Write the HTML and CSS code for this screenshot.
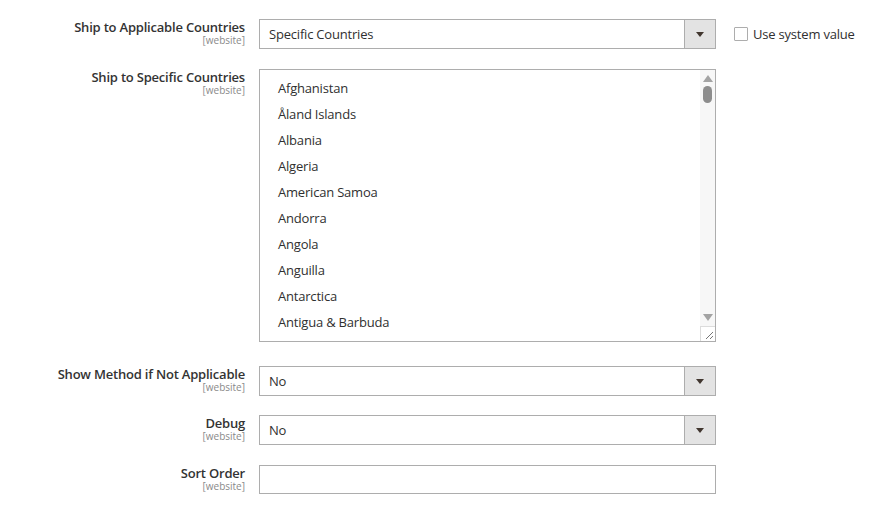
FILE: index.html
```html
<!DOCTYPE html>
<html>
<head>
<meta charset="utf-8">
<link rel="stylesheet" href="styles.css">
</head>
<body>
<div class="form">
  <div class="row r1">
    <div class="label"><span class="title">Ship to Applicable Countries</span><span class="scope">[website]</span></div>
    <div class="control">
      <div class="select"><span class="value">Specific Countries</span><span class="btn"><i class="tri"></i></span></div>
    </div>
    <label class="system"><span class="check"></span><span>Use system value</span></label>
  </div>
  <div class="row r2">
    <div class="label"><span class="title">Ship to Specific Countries</span><span class="scope">[website]</span></div>
    <div class="control">
      <div class="multi">
        <ul class="options">
          <li>Afghanistan</li>
          <li>Åland Islands</li>
          <li>Albania</li>
          <li>Algeria</li>
          <li>American Samoa</li>
          <li>Andorra</li>
          <li>Angola</li>
          <li>Anguilla</li>
          <li>Antarctica</li>
          <li>Antigua &amp; Barbuda</li>
        </ul>
        <div class="scrollbar">
          <i class="up"></i>
          <i class="thumb"></i>
          <span class="spacer"></span>
          <i class="down"></i>
          <span class="resize"><svg width="14" height="14" viewBox="0 0 14 14"><path d="M5 12 L12 5 M9 12 L12 9" stroke="#777" stroke-width="1" fill="none"/></svg></span>
        </div>
      </div>
    </div>
  </div>
  <div class="row r3">
    <div class="label"><span class="title">Show Method if Not Applicable</span><span class="scope">[website]</span></div>
    <div class="control">
      <div class="select"><span class="value">No</span><span class="btn"><i class="tri"></i></span></div>
    </div>
  </div>
  <div class="row r4">
    <div class="label"><span class="title">Debug</span><span class="scope">[website]</span></div>
    <div class="control">
      <div class="select"><span class="value">No</span><span class="btn"><i class="tri"></i></span></div>
    </div>
  </div>
  <div class="row r5">
    <div class="label"><span class="title">Sort Order</span><span class="scope">[website]</span></div>
    <div class="control">
      <div class="input"></div>
    </div>
  </div>
</div>
</body>
</html>
```

FILE: styles.css
```css
html, body {
  margin: 0;
  padding: 0;
  background: #ffffff;
}
body {
  font-family: "Open Sans", "Liberation Sans", sans-serif;
  color: #303030;
  font-size: 13px;
  letter-spacing: -0.2px;
}
.form {
  padding-top: 19px;
}
.row {
  display: grid;
  grid-template-columns: 245px 457px auto;
  column-gap: 14px;
  align-items: start;
}
.r1 { margin-bottom: 20px; }
.r2 { margin-bottom: 24px; }
.r3 { margin-bottom: 19px; }
.r4 { margin-bottom: 20px; }
.label {
  display: flex;
  flex-direction: column;
  align-items: flex-end;
  text-align: right;
}
.title {
  font-weight: 600;
  font-size: 13px;
  line-height: 16px;
  color: #333333;
}
.scope {
  font-size: 10px;
  line-height: 11px;
  color: #8a8a8a;
  letter-spacing: 0;
}
.select {
  display: flex;
  height: 30px;
  box-sizing: border-box;
  border: 1px solid #adadad;
  background: #fff;
}
.value {
  flex: 1;
  padding-left: 9px;
  line-height: 28px;
  color: #303030;
}
.btn {
  width: 30px;
  background: #e3e3e3;
  border-left: 1px solid #adadad;
  display: flex;
  align-items: center;
  justify-content: center;
}
.tri {
  width: 0;
  height: 0;
  border-left: 4px solid transparent;
  border-right: 4px solid transparent;
  border-top: 5px solid #41362f;
}
.system {
  display: flex;
  align-items: center;
  gap: 5px;
  height: 30px;
  margin-left: 4px;
  color: #303030;
}
.check {
  width: 14px;
  height: 14px;
  box-sizing: border-box;
  border: 1px solid #adadad;
  border-radius: 1px;
  background: #fff;
}
.multi {
  display: flex;
  height: 273px;
  box-sizing: border-box;
  border: 1px solid #adadad;
  overflow: hidden;
}
.options {
  flex: 1;
  list-style: none;
  margin: 0;
  padding: 5px 0 0 18px;
}
.options li {
  line-height: 26px;
  height: 26px;
  white-space: nowrap;
}
.scrollbar {
  width: 15px;
  background: #f7f7f7;
  display: flex;
  flex-direction: column;
  align-items: center;
}
.up {
  margin-top: 5px;
  width: 0;
  height: 0;
  border-left: 5px solid transparent;
  border-right: 5px solid transparent;
  border-bottom: 7px solid #a3a3a3;
}
.thumb {
  margin-top: 4px;
  width: 9px;
  height: 17px;
  border-radius: 5px;
  background: #8d8d8d;
}
.spacer { flex: 1; }
.down {
  margin-bottom: 5px;
  width: 0;
  height: 0;
  border-left: 5px solid transparent;
  border-right: 5px solid transparent;
  border-top: 7px solid #a3a3a3;
}
.resize {
  width: 15px;
  height: 15px;
  box-sizing: border-box;
  border-top: 1px solid #dcdcdc;
  border-left: 1px solid #dcdcdc;
  background: #fff;
  display: flex;
  align-items: flex-end;
  justify-content: flex-end;
}
.resize svg { display: block; }
.input {
  height: 29px;
  box-sizing: border-box;
  border: 1px solid #adadad;
  background: #fff;
}
```
